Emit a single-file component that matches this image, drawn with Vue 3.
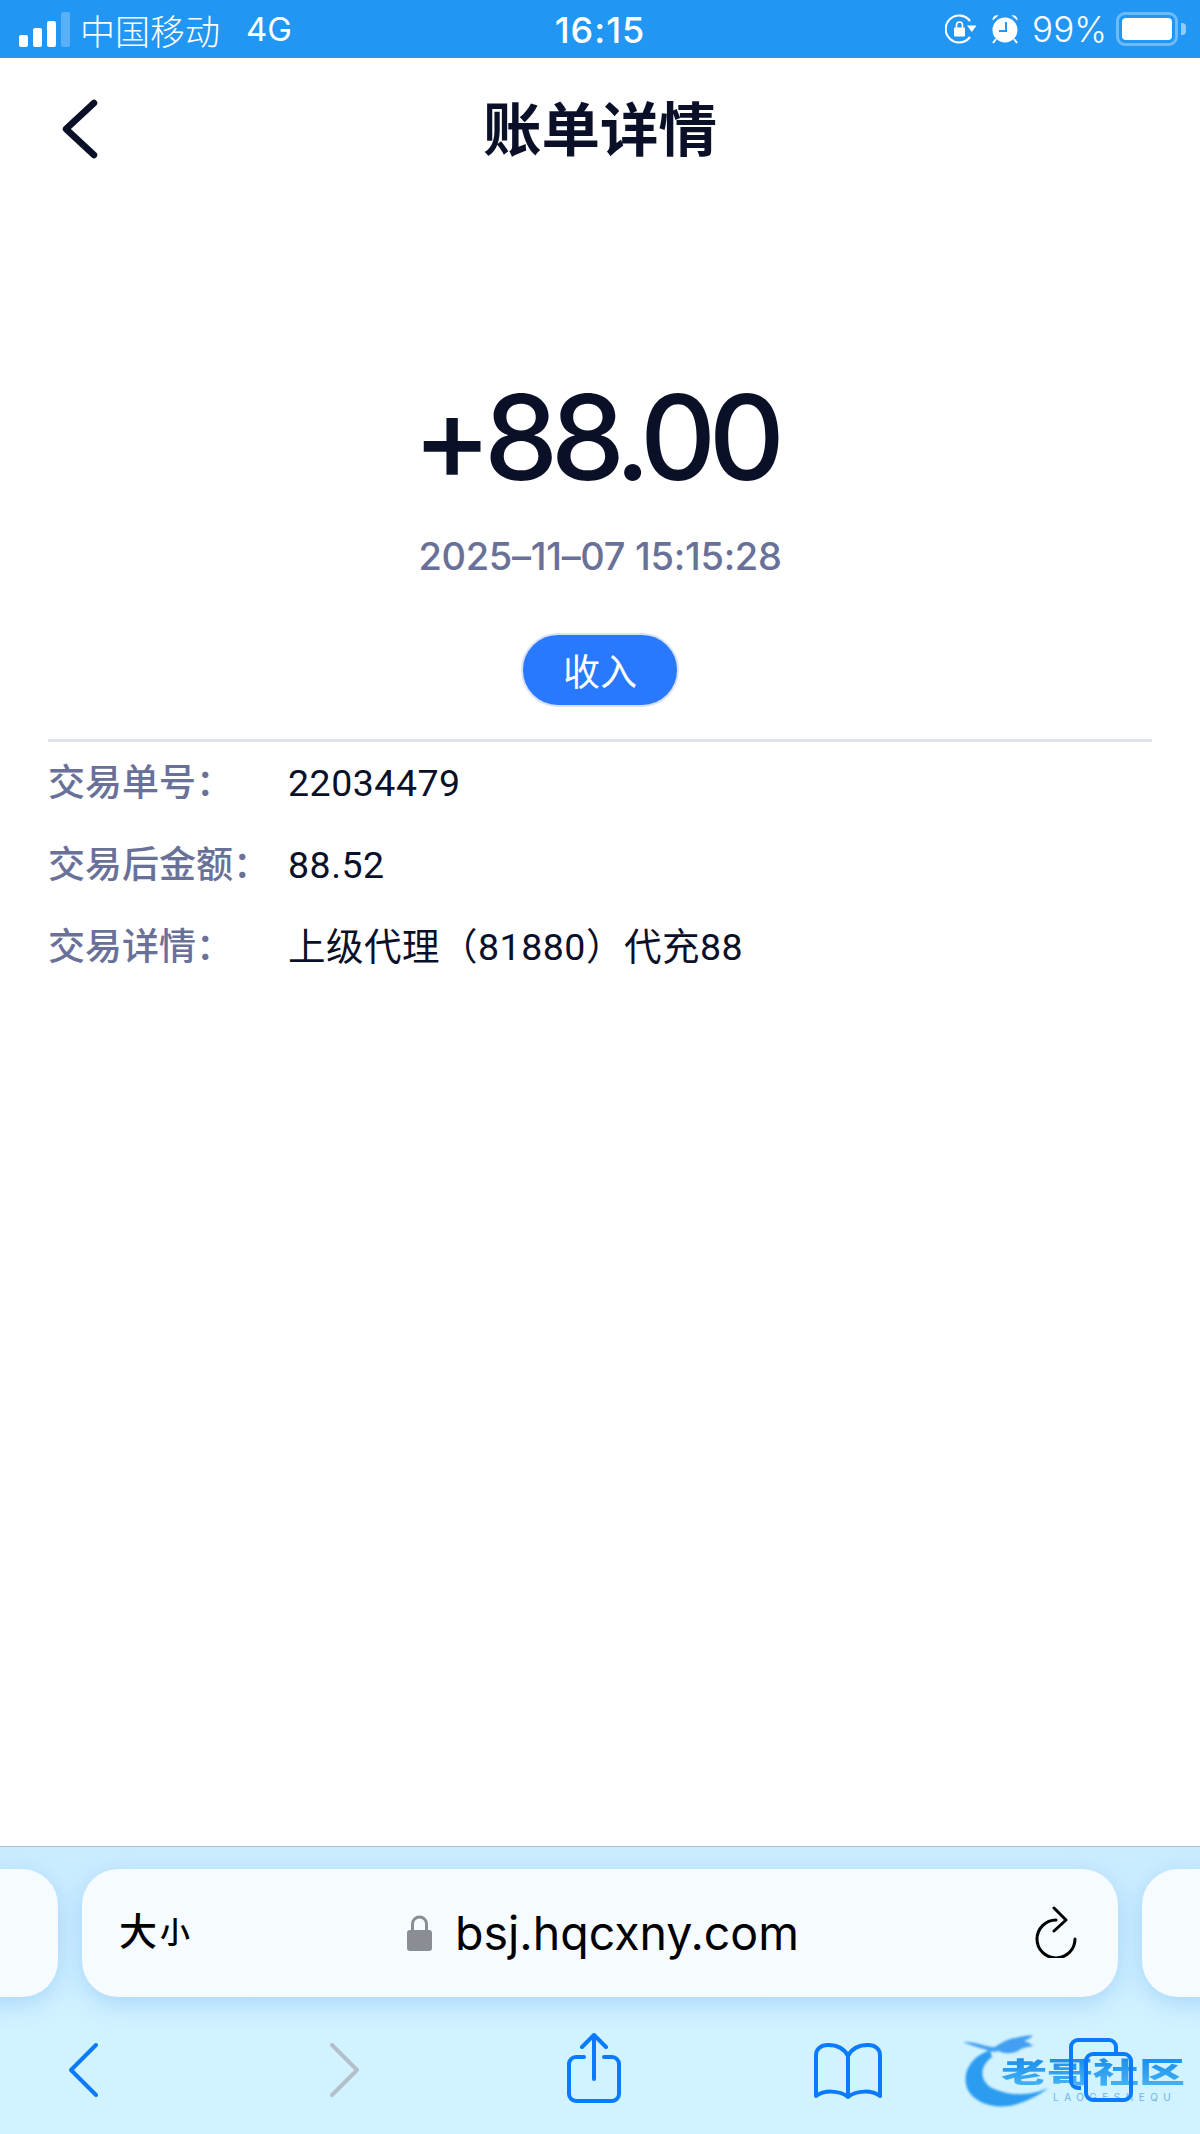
<script setup>
const rows = [
  { label: "交易单号：", value: "22034479" },
  { label: "交易后金额：", value: "88.52" },
  { label: "交易详情：", value: "上级代理（81880）代充88" },
];
</script>

<template>
  <div class="phone">
    <!-- status bar -->
    <div class="status">
      <div class="status-left">
        <div class="signal">
          <i class="b1"></i><i class="b2"></i><i class="b3"></i><i class="b4"></i>
        </div>
        <span class="carrier">中国移动</span>
        <span class="net">4G</span>
      </div>
      <div class="clock">16:15</div>
      <div class="status-right">
        <svg class="rot" width="32" height="30" viewBox="0 0 32 30">
          <path d="M25 7A13.500 13.500 0 1 0 25 23" fill="none" stroke="#fff" stroke-width="2.200" />
          <path d="M22 11.500h9.500l-4.700 6.500z" fill="#fff" />
          <rect x="9" y="13.500" width="11" height="9" rx="1" fill="#fff" />
          <path d="M11.500 14v-3a3 3 0 0 1 6 0v3" fill="none" stroke="#fff" stroke-width="1.600" />
        </svg>
        <svg class="alarm" width="28" height="32" viewBox="0 0 28 32">
          <circle cx="14" cy="17" r="12.500" fill="#fff" />
          <path d="M1.500 7.500a4.500 4.500 0 0 1 6-5zM26.500 7.500a4.500 4.500 0 0 0-6-5z" fill="#fff" />
          <path d="M5 26l-3 4M23 26l3 4" stroke="#fff" stroke-width="2" />
          <path d="M15 9v9H8" fill="none" stroke="#2196f3" stroke-width="2" />
        </svg>
        <span class="percent">99%</span>
        <div class="battery"><div class="level"></div></div>
        <div class="nub"></div>
      </div>
    </div>

    <!-- nav -->
    <div class="nav">
      <svg class="nav-back" width="38" height="60" viewBox="0 0 38 60">
        <path d="M33 4L5 30l28 26" fill="none" stroke="#0b1029" stroke-width="6.500" stroke-linecap="round" stroke-linejoin="round" />
      </svg>
      <h1>账单详情</h1>
    </div>

    <!-- content -->
    <div class="content">
      <div class="amount">+88.00</div>
      <div class="date">2025–11–07 15:15:28</div>
      <div class="pill">收入</div>
      <div class="detail">
        <div v-for="row in rows" :key="row.label" class="row">
          <span class="label">{{ row.label }}</span>
          <span class="value">{{ row.value }}</span>
        </div>
      </div>
    </div>

    <!-- safari chrome -->
    <div class="chrome">
      <div class="url-row">
        <div class="side side-l"></div>
        <div class="url">
          <div class="aa"><span class="big">大</span><span class="small">小</span></div>
          <div class="host">
            <svg width="25" height="36" viewBox="0 0 25 36">
              <path d="M5.500 16V9a7 7 0 0 1 14 0v7" fill="none" stroke="#8a8d94" stroke-width="3" />
              <rect x="0" y="15" width="25" height="21" rx="3" fill="#8a8d94" />
            </svg>
            <span>bsj.hqcxny.com</span>
          </div>
          <svg class="reload" width="44" height="52" viewBox="0 0 44 52">
            <path d="M22 14A19 19 0 1 0 41 33" fill="none" stroke="#000" stroke-width="3" stroke-linecap="round" />
            <path d="M20 2l12 12-12 11" fill="none" stroke="#000" stroke-width="3" stroke-linecap="round" stroke-linejoin="round" />
          </svg>
        </div>
        <div class="side side-r"></div>
      </div>
      <div class="tools">
        <svg class="t-back" width="29" height="54" viewBox="0 0 29 54">
          <path d="M27 2L2 27l25 25" fill="none" stroke="#0a7aff" stroke-width="4" stroke-linecap="round" stroke-linejoin="round" />
        </svg>
        <svg class="t-fwd" width="29" height="54" viewBox="0 0 29 54">
          <path d="M2 2l25 25L2 52" fill="none" stroke="#b5bfcb" stroke-width="4" stroke-linecap="round" stroke-linejoin="round" />
        </svg>
        <svg class="t-share" width="54" height="70" viewBox="0 0 54 70">
          <path d="M17 24H9a7 7 0 0 0-7 7v30a7 7 0 0 0 7 7h36a7 7 0 0 0 7-7V31a7 7 0 0 0-7-7h-8" fill="none" stroke="#0a7aff" stroke-width="4" stroke-linecap="round" />
          <path d="M27 46V3M15 14L27 2l12 12" fill="none" stroke="#0a7aff" stroke-width="4" stroke-linecap="round" stroke-linejoin="round" />
        </svg>
        <svg class="t-book" width="68" height="56" viewBox="0 0 68 56">
          <path d="M34 13C30 5 22 2 14 2 7 2 2 6 2 12v41c8-6 23-6 32 1 9-7 24-7 32-1V12c0-6-5-10-12-10-8 0-16 3-20 11zM34 13v40" fill="none" stroke="#0a7aff" stroke-width="4" stroke-linecap="round" stroke-linejoin="round" />
        </svg>
        <svg class="t-tabs" width="64" height="64" viewBox="0 0 64 64">
          <path d="M12 50H9a7 7 0 0 1-7-7V9a7 7 0 0 1 7-7h31a7 7 0 0 1 7 7v5" fill="none" stroke="#0a7aff" stroke-width="4" />
          <rect x="17" y="16" width="45" height="46" rx="7" fill="none" stroke="#0a7aff" stroke-width="4" />
        </svg>
      </div>
      <!-- watermark sits under the toolbar icons -->
      <div class="mark">
        <svg class="dragon" width="100" height="76" viewBox="0 0 100 76">
          <path d="M28 17C8 24 0 40 5 55c7 17 33 23 53 15 12-4 22-10 28-15-14 7-36 9-54 1C18 50 16 34 30 24z" fill="#2b9cf0" />
          <path d="M1 9c12-1 22 5 32 5 6-4 12-8 20-9 8-2 14-3 18-2-3 2-6 4-9 5 4 1 7 3 9 5-7 1-11 2-15 5-7 3-14 3-19 0-4 1-8 1-12-1C15 14 8 12 1 9z" fill="#2a90ee" opacity=".85" />
        </svg>
        <span class="mark-name">老哥社区</span>
        <span class="mark-sub">LAOGESHEQU</span>
      </div>
    </div>
  </div>
</template>

<style>
html,
body {
  margin: 0;
  background: #fff;
}
</style>

<style scoped>
.phone {
  width: 1200px;
  height: 2134px;
  display: flex;
  flex-direction: column;
  overflow: hidden;
  background: #fff;
  font-family: Inter, "Noto Sans CJK SC", sans-serif;
  color: #0b1029;
}

.status {
  height: 58px;
  flex: none;
  background: #2196f3;
  color: #fff;
  display: grid;
  grid-template-columns: 1fr auto 1fr;
  align-items: center;
  font-size: 35px;
}
.status-left {
  display: flex;
  align-items: center;
  padding-left: 19px;
}
.signal {
  display: flex;
  align-items: flex-end;
  gap: 5px;
  height: 32px;
  margin-top: 3px;
}
.signal i {
  display: block;
  width: 9px;
  border-radius: 2px;
  background: #fff;
}
.signal .b1 { height: 12px; }
.signal .b2 { height: 19px; }
.signal .b3 { height: 26px; }
.signal .b4 { height: 35px; background: rgba(255, 255, 255, 0.25); }
.carrier {
  margin-left: 10px;
  font-weight: 300;
}
.net {
  margin-left: 26px;
  font-size: 33px;
  font-weight: 400;
}
.clock {
  font-size: 36px;
  font-weight: 500;
  letter-spacing: 1px;
  margin-top: 1px;
}
.status-right {
  display: flex;
  align-items: center;
  justify-content: flex-end;
  padding-right: 14px;
}
.alarm {
  margin-left: 14px;
}
.percent {
  margin-left: 13px;
  font-size: 35px;
  font-weight: 300;
}
.battery {
  margin-left: 9px;
  width: 62px;
  height: 34px;
  box-sizing: border-box;
  border: 3px solid rgba(255, 255, 255, 0.35);
  border-radius: 9px;
  padding: 3px;
}
.level {
  height: 100%;
  background: #fff;
  border-radius: 4px;
}
.nub {
  margin-left: 3px;
  width: 5px;
  height: 12px;
  border-radius: 0 4px 4px 0;
  background: rgba(255, 255, 255, 0.5);
}

.nav {
  height: 142px;
  flex: none;
  position: relative;
  display: flex;
  align-items: center;
  justify-content: center;
}
.nav h1 {
  margin: 0 0 8px;
  font-size: 58.500px;
  font-weight: 700;
}
.nav-back {
  position: absolute;
  left: 61px;
  top: 41px;
}

.content {
  flex: 1;
  display: flex;
  flex-direction: column;
  align-items: center;
  padding: 174px 48px 0;
}
.amount {
  font-size: 118px;
  font-weight: 500;
  line-height: 126px;
  letter-spacing: -7.500px;
  margin-right: 10px;
}
.date {
  margin-top: 33px;
  font-size: 38px;
  font-weight: 500;
  line-height: 46px;
  letter-spacing: -0.300px;
  color: #6a7199;
}
.pill {
  margin-top: 54px;
  width: 158px;
  height: 74px;
  box-sizing: border-box;
  border: 2px solid #d8e2f5;
  border-radius: 37px;
  background: #2979ff;
  color: #fff;
  font-size: 37px;
  display: flex;
  align-items: center;
  justify-content: center;
}
.detail {
  align-self: stretch;
  margin-top: 32px;
  border-top: 3px solid #e0e3ee;
  padding-top: 18px;
}
.row {
  display: flex;
  height: 82px;
  align-items: flex-start;
  font-size: 37px;
  font-weight: 500;
  line-height: 46px;
}
.label {
  width: 240px;
  flex: none;
  color: #6a7199;
}
.value {
  font-family: Roboto, "Noto Sans CJK SC", sans-serif;
  font-size: 37.500px;
  font-weight: 400;
  color: #0b1029;
  letter-spacing: 0.500px;
}

.chrome {
  height: 288px;
  flex: none;
  position: relative;
  box-sizing: border-box;
  border-top: 1px solid #a9c0d4;
  background: linear-gradient(#caecff, #d1f2ff 60%);
}
.url-row {
  display: flex;
  gap: 24px;
  margin-top: 22px;
  margin-left: -200px;
  width: 1600px;
  height: 128px;
}
.side {
  flex: none;
  width: 258px;
  background: #f6fbff;
  border-radius: 36px;
  box-shadow: 0 6px 24px rgba(120, 180, 245, 0.45);
}
.url {
  flex: none;
  width: 1036px;
  position: relative;
  display: flex;
  align-items: center;
  justify-content: center;
  background: #f6fbff;
  border-radius: 36px;
  box-shadow: 0 6px 24px rgba(120, 180, 245, 0.45);
  color: #000;
}
.aa {
  position: absolute;
  left: 37px;
  top: 38px;
  display: flex;
  align-items: flex-end;
}
.big { font-size: 38px; line-height: 48px; font-weight: 500; }
.small { font-size: 30px; line-height: 45px; margin-left: 3px; font-weight: 500; }
.host {
  display: flex;
  align-items: center;
  gap: 23px;
  font-size: 46.500px;
  margin-left: 6px;
}
.reload {
  position: absolute;
  right: 40px;
  top: 37px;
}

.tools {
  position: relative;
  z-index: 1;
  display: flex;
  align-items: flex-start;
  padding-left: 69px;
  margin-top: 36px;
}
.t-back { margin-top: 10px; }
.t-fwd { margin-left: 232px; margin-top: 10px; }
.t-share { margin-left: 208px; }
.t-book { margin-left: 193px; margin-top: 10px; }
.t-tabs { margin-left: 187px; margin-top: 5px; }

.mark {
  position: absolute;
  left: 962px;
  top: 186px;
  width: 222px;
  height: 76px;
}
.dragon {
  position: absolute;
  left: 0;
  top: 0;
  filter: blur(1px);
}
.mark-name {
  position: absolute;
  left: 39px;
  top: 24px;
  font-size: 46px;
  line-height: 50px;
  font-weight: 900;
  white-space: nowrap;
  background: linear-gradient(#1b8bea, #45b6f7);
  -webkit-background-clip: text;
  background-clip: text;
  color: transparent;
  transform: scaleY(0.62);
  transform-origin: top left;
  filter: blur(0.7px);
}
.mark-sub {
  position: absolute;
  left: 91px;
  top: 58px;
  font-size: 10px;
  line-height: 12px;
  letter-spacing: 5.500px;
  color: #6db4e8;
  white-space: nowrap;
}
</style>
